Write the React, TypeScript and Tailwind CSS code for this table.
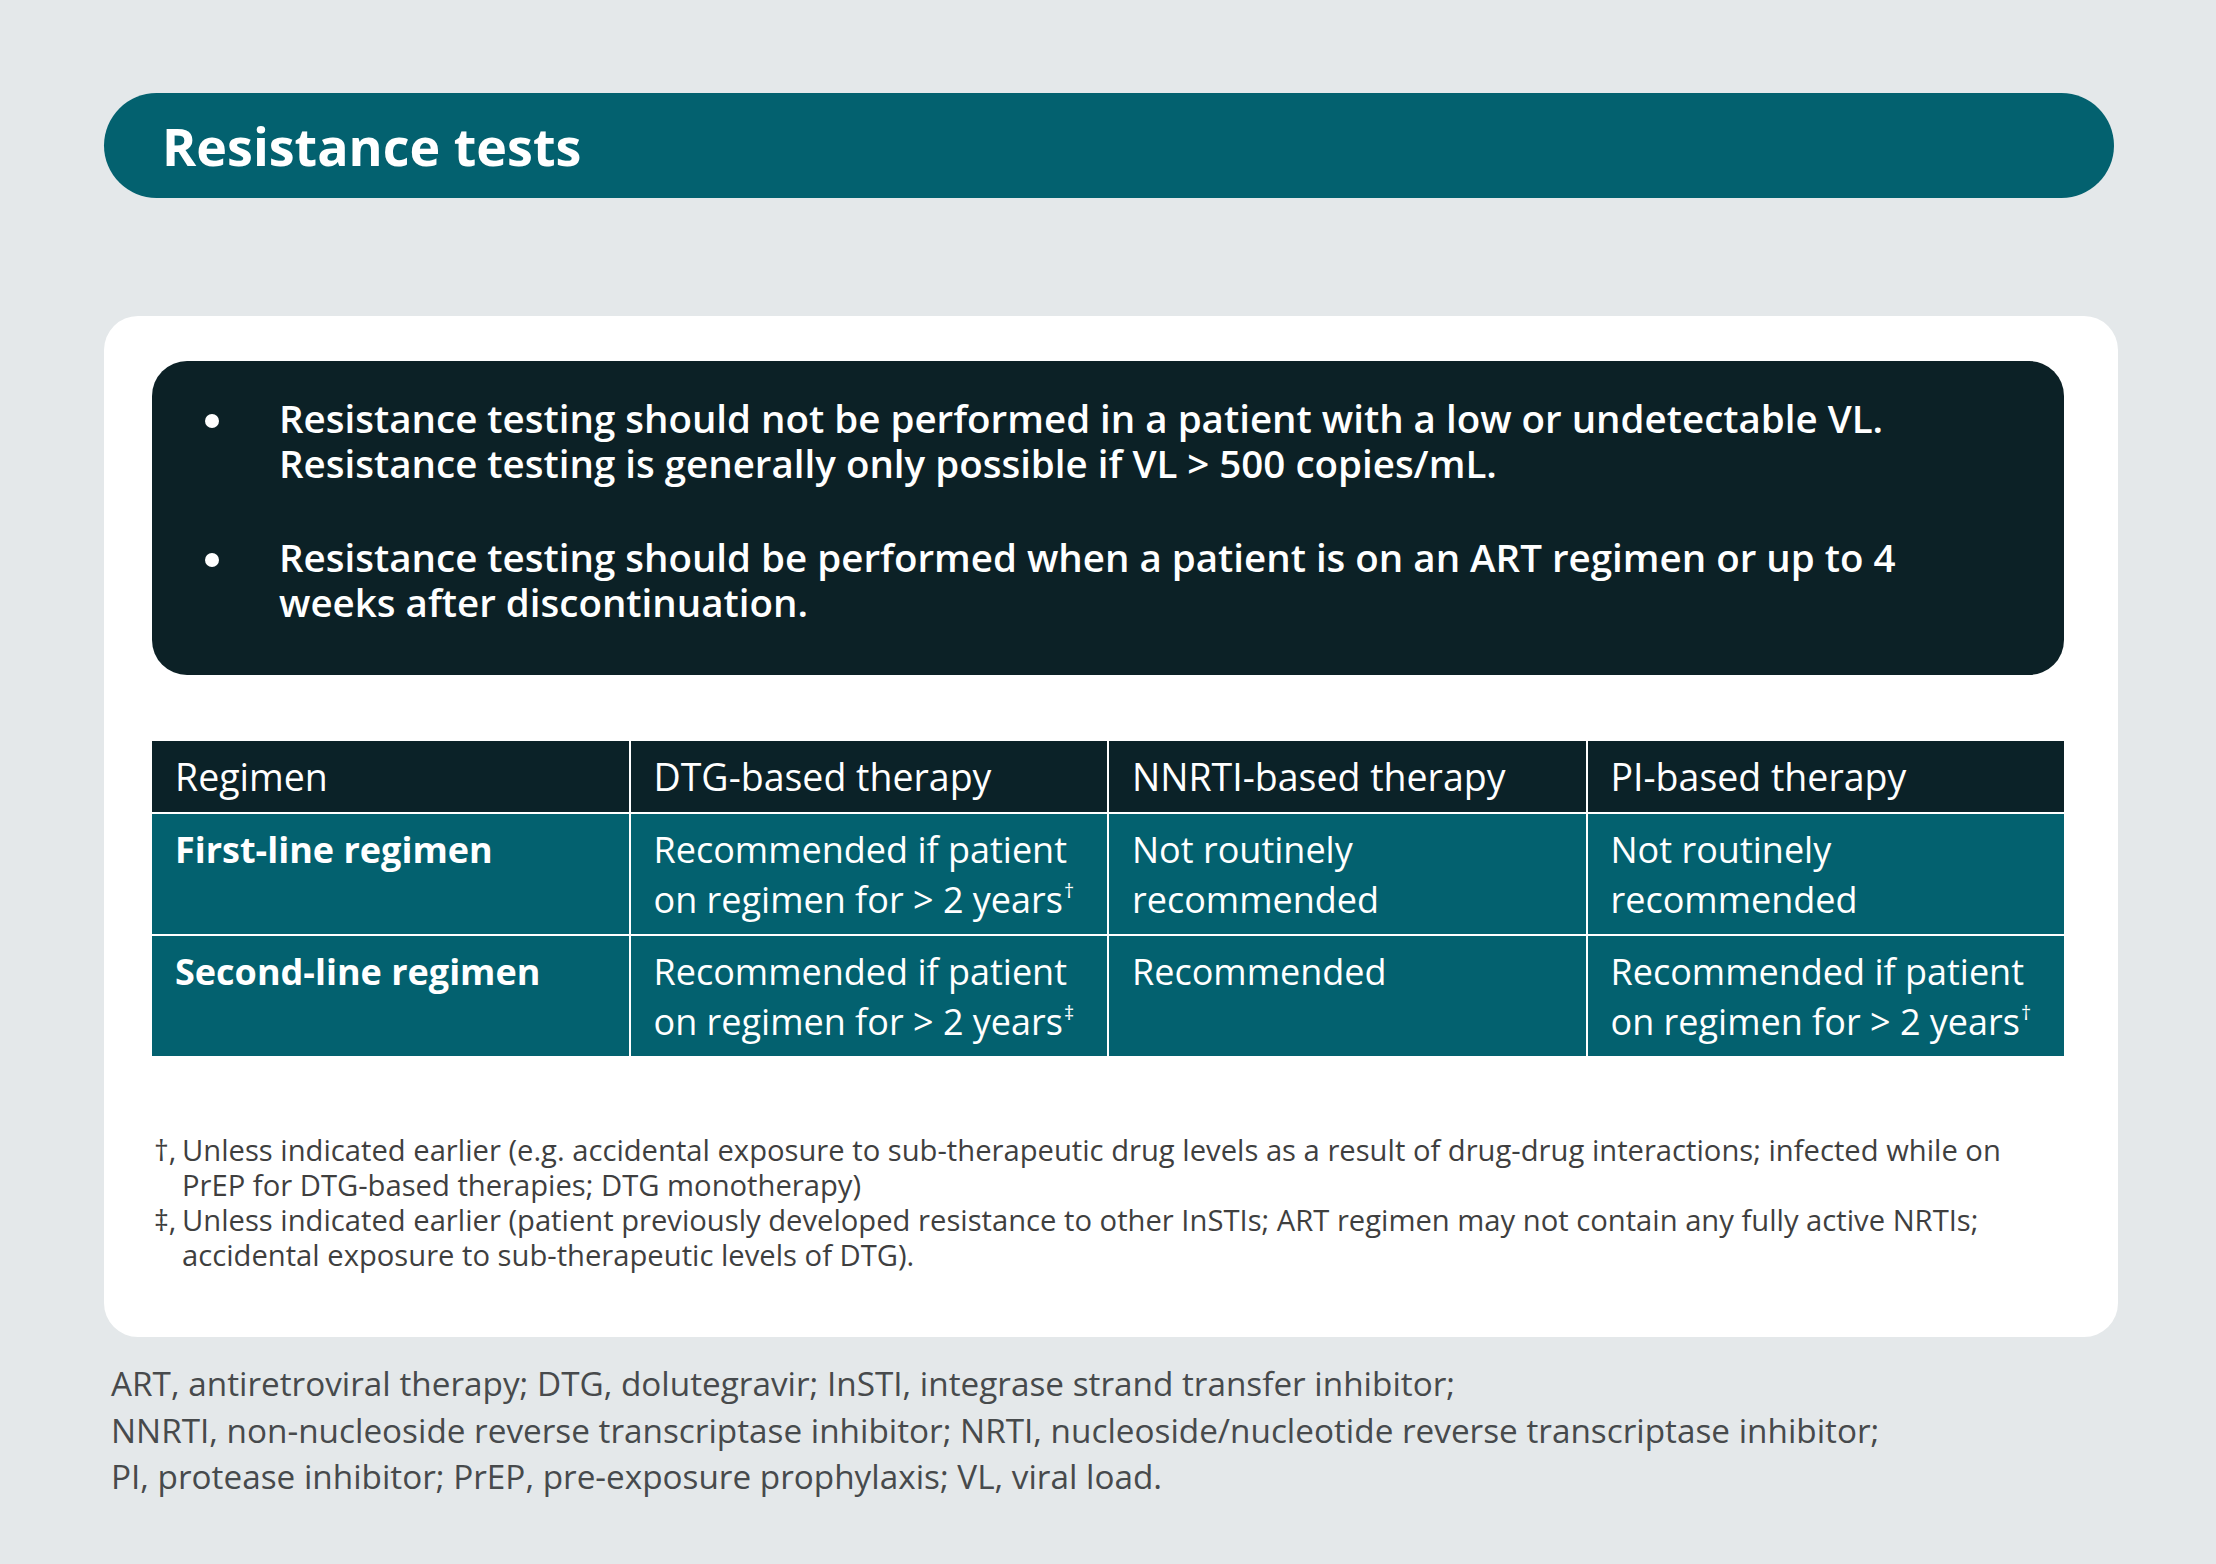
const rows = [
  {
    label: 'First-line regimen',
    dtg: { text: 'Recommended if patient on regimen for > 2 years', mark: '†' },
    nnrti: { text: 'Not routinely recommended', mark: '' },
    pi: { text: 'Not routinely recommended', mark: '' },
  },
  {
    label: 'Second-line regimen',
    dtg: { text: 'Recommended if patient on regimen for > 2 years', mark: '‡' },
    nnrti: { text: 'Recommended', mark: '' },
    pi: { text: 'Recommended if patient on regimen for > 2 years', mark: '†' },
  },
];

const headers = ['Regimen', 'DTG-based therapy', 'NNRTI-based therapy', 'PI-based therapy'];

const Cell = ({ text, mark }: { text: string; mark: string }) => (
  <div className="bg-[#03616f] text-white text-[36px] leading-[50px] pl-[23px] pr-[16px] pt-[11px] pb-[9px]">
    {text}
    {mark && <span className="relative -top-[15px] ml-[1px] text-[20px] leading-none">{mark}</span>}
  </div>
);

const App = () => {
  return (
    <div className="min-h-[1564px] w-full bg-[#e4e8ea] pl-[104px] pr-[98px] pt-[93px] font-['Open_Sans',sans-serif]">
      {/* Title bar */}
      <div className="flex h-[105px] w-[2010px] items-center rounded-full bg-[#03616f] pl-[58px]">
        <h1 className="text-[52px] font-bold text-white">Resistance tests</h1>
      </div>

      {/* Card */}
      <div className="mt-[118px] rounded-[34px] bg-white pl-[48px] pr-[54px] pt-[45px] pb-[64px]">
        {/* Key points */}
        <div className="rounded-[35px] bg-[#0c2126] pl-[53px] pr-[60px] pt-[35px] pb-[50px] text-white">
          <ul className="flex flex-col gap-[49px]">
            <li className="flex">
              <span className="mt-[18px] h-[14px] w-[14px] shrink-0 rounded-full bg-white" />
              <p className="ml-[60px] text-[38.5px] font-semibold leading-[45px] whitespace-nowrap">
                Resistance testing should not be performed in a patient with a low or undetectable VL.
                <br />
                Resistance testing is generally only possible if VL &gt; 500 copies/mL.
              </p>
            </li>
            <li className="flex">
              <span className="mt-[18px] h-[14px] w-[14px] shrink-0 rounded-full bg-white" />
              <p className="ml-[60px] text-[38.5px] font-semibold leading-[45px] whitespace-nowrap">
                Resistance testing should be performed when a patient is on an ART regimen or up to 4
                <br />
                weeks after discontinuation.
              </p>
            </li>
          </ul>
        </div>

        {/* Table */}
        <div className="mt-[66px] grid grid-cols-4 gap-[2px] bg-white">
          {headers.map((h) => (
            <div key={h} className="bg-[#0b2228] text-white text-[37.5px] leading-[50px] pl-[23px] pt-[11px] pb-[10px]">
              {h}
            </div>
          ))}
          {rows.map((r) => (
            <div key={r.label} className="contents">
              <div className="bg-[#03616f] text-white text-[36px] font-bold leading-[50px] pl-[23px] pt-[11px] pb-[9px]">
                {r.label}
              </div>
              <Cell {...r.dtg} />
              <Cell {...r.nnrti} />
              <Cell {...r.pi} />
            </div>
          ))}
        </div>

        {/* Footnotes */}
        <div className="mt-[77px] text-[29.2px] leading-[35px] text-[#3f3f3f]">
          <div className="flex">
            <span className="w-[30px] shrink-0 pl-[2px]">†,</span>
            <p className="whitespace-nowrap">
              Unless indicated earlier (e.g. accidental exposure to sub-therapeutic drug levels as a result of drug-drug interactions; infected while on
              <br />
              PrEP for DTG-based therapies; DTG monotherapy)
            </p>
          </div>
          <div className="flex">
            <span className="w-[30px] shrink-0 pl-[2px]">‡,</span>
            <p className="whitespace-nowrap">
              Unless indicated earlier (patient previously developed resistance to other InSTIs; ART regimen may not contain any fully active NRTIs;
              <br />
              accidental exposure to sub-therapeutic levels of DTG).
            </p>
          </div>
        </div>
      </div>

      {/* Abbreviations */}
      <p className="mt-[23px] ml-[7px] text-[33.3px] leading-[46.5px] text-[#474a4c]">
        ART, antiretroviral therapy; DTG, dolutegravir; InSTI, integrase strand transfer inhibitor;
        <br />
        NNRTI, non-nucleoside reverse transcriptase inhibitor; NRTI, nucleoside/nucleotide reverse transcriptase inhibitor;
        <br />
        PI, protease inhibitor; PrEP, pre-exposure prophylaxis; VL, viral load.
      </p>
    </div>
  );
};

export default App;
